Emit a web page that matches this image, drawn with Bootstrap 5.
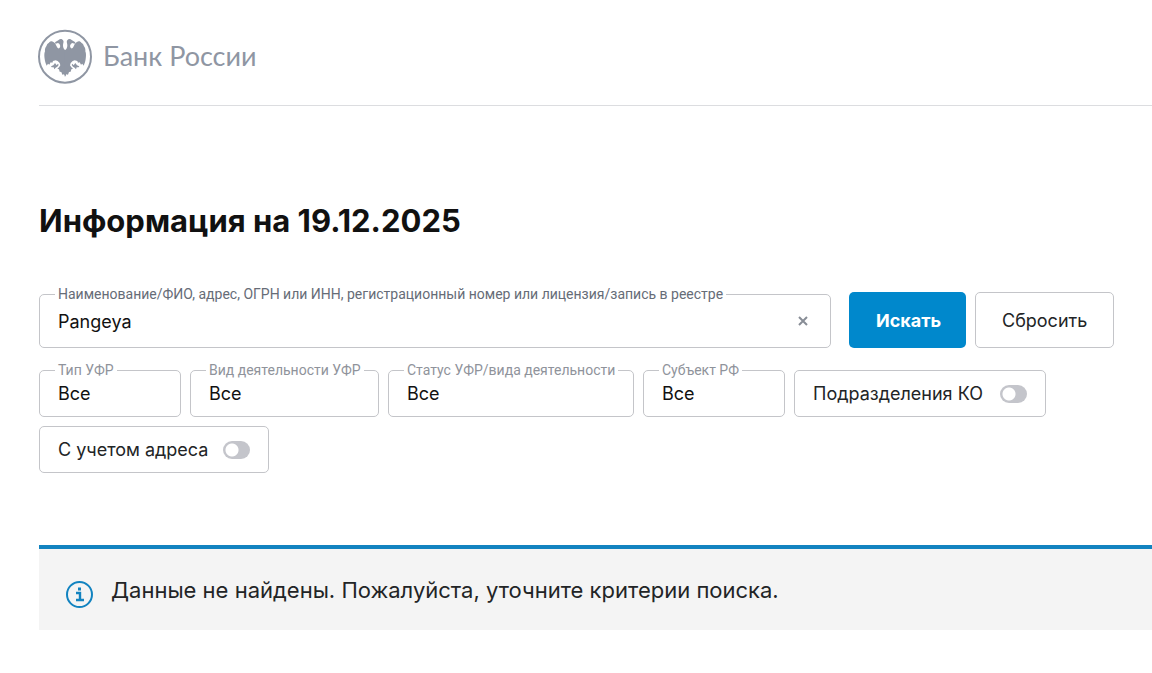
<!DOCTYPE html>
<html lang="ru">
<head>
<meta charset="utf-8">
<meta name="viewport" content="width=device-width, initial-scale=1">
<title>Банк России</title>
<link href="https://cdn.jsdelivr.net/npm/bootstrap@5.3.0/dist/css/bootstrap.min.css" rel="stylesheet">
<style>
  :root { --edge: 39px; --line: #c4c5c9; --accent: #0088cc; }
  body { font-family: Inter, "Liberation Sans", sans-serif; font-size: 18px; line-height: 24px; color: #222426; background: #fff; }
  .page { padding-left: var(--edge); }
  .site-header { padding: 29px 0 21px; border-bottom: 1px solid #dcdde0; }
  .brand { gap: 11px; margin-left: -1px; color: #8f96a3; font-family: Lato, "Open Sans", sans-serif; font-size: 27px; line-height: 32px; }
  .brand span { padding-bottom: 2px; }
  .page-title { margin: 95px 0 51px; font-size: 31px; line-height: 40px; font-weight: 700; color: #111; }
  .search-row { padding-right: 38px; gap: 9px; }
  .field { position: relative; border: 1px solid var(--line); border-radius: 5px; }
  .field-caption { position: absolute; top: -10px; left: 15px; padding: 0 3px; background: #fff; color: #8f939b; font-family: Roboto, sans-serif; font-size: 14px; line-height: 18px; white-space: nowrap; }
  .field-main { height: 54px; margin-right: 9px; }
  .field-main .field-caption { color: #666c77; }
  .field input[type=text], .field select { width: 100%; height: 100%; padding: 0 18px; border: 0; background: transparent; color: #111; appearance: none; outline-offset: -2px; }
  .clear-btn { padding: 0 22px; border: 0; background: transparent; color: #888d96; }
  .action { height: 56px; padding: 0 26px; border-radius: 5px; font-size: 18px; }
  .action-find { width: 117px; background: var(--accent); color: #fff; font-weight: 700; }
  .action-reset { width: 139px; border-color: var(--line); color: #222426; }
  .filters { gap: 9px; margin-top: 22px; padding-right: 38px; }
  .filter { height: 47px; }
  .w-short { width: 142px; }
  .w-kind { width: 189px; }
  .w-status { width: 246px; }
  .w-units { width: 252px; }
  .w-address { width: 230px; }
  .toggle-box { padding: 0 18px; white-space: nowrap; }
  .switch { appearance: none; width: 27px; height: 18px; margin: 0; border-radius: 9px; background: radial-gradient(circle at 9px 9px, #fff 6px, transparent 7px) #c4c5cb; }
  .switch:checked { background: radial-gradient(circle at 18px 9px, #fff 6px, transparent 7px) var(--accent); }
  .notice { gap: 18px; margin-top: 72px; padding: 26px 27px 22px; border-top: 4px solid #1283c0; background: #f4f4f4; font-size: 22px; line-height: 30px; }
  .notice svg { margin-top: 6px; }
</style>
</head>
<body>
<div class="page">
  <header class="site-header d-flex">
    <a href="#" class="brand d-flex align-items-center text-decoration-none">
      <svg width="54" height="55" viewBox="24 29 162 165" aria-hidden="true">
        <circle cx="105" cy="112" r="78" fill="none" stroke="currentColor" stroke-width="6"/>
        <g id="half" fill="currentColor">
          <path d="M107 93C101 91 99 84 99 78C99 72 102 68 100 64C97 58 90 57 86 62L75 69L77 73L84 71C90 74 92 79 90 84C88 89 83 88 81 83C78 77 75 69 70 68C66 64 60 65 57 70C52 72 50 77 49 81C46 85 44 91 45 96C42 103 43 111 44 119C45 127 47 132 50 139L54 133L58 136L62 129L67 130L69 125L77 123L83 125L89 131L91 138L87 144L82 148L87 150L89 157L94 158L97 166L102 165L107 172Z"/>
          <path d="M63 141L70 138L75 131L80 138L84 133L86 137L82 142L77 145L73 150L71 144L65 144Z"/>
        </g>
        <use href="#half" transform="translate(211 0) scale(-1 1)"/>
      </svg>
      <span>Банк России</span>
    </a>
  </header>

  <main>
    <h1 class="page-title">Информация на 19.12.2025</h1>
    <form onsubmit="return false">
      <div class="search-row d-flex align-items-end">
        <div class="field field-main d-flex flex-grow-1">
          <label class="field-caption" for="query">Наименование/ФИО, адрес, ОГРН или ИНН, регистрационный номер или лицензия/запись в реестре</label>
          <input type="text" id="query" value="Pangeya">
          <button type="button" class="clear-btn" aria-label="Очистить">
            <svg class="d-block" width="10" height="10" viewBox="0 0 10 10" stroke="currentColor" stroke-width="2"><path d="M1 1l8 8M9 1L1 9"/></svg>
          </button>
        </div>
        <button type="submit" class="btn action action-find">Искать</button>
        <button type="reset" class="btn action action-reset">Сбросить</button>
      </div>

      <div class="filters d-flex flex-wrap">
        <div class="field filter w-short">
          <label class="field-caption" for="type">Тип УФР</label>
          <select id="type"><option>Все</option></select>
        </div>
        <div class="field filter w-kind">
          <label class="field-caption" for="kind">Вид деятельности УФР</label>
          <select id="kind"><option>Все</option></select>
        </div>
        <div class="field filter w-status">
          <label class="field-caption" for="status">Статус УФР/вида деятельности</label>
          <select id="status"><option>Все</option></select>
        </div>
        <div class="field filter w-short">
          <label class="field-caption" for="region">Субъект РФ</label>
          <select id="region"><option>Все</option></select>
        </div>
        <label class="field filter toggle-box w-units d-flex align-items-center justify-content-between">Подразделения КО
          <input type="checkbox" role="switch" class="switch">
        </label>
        <label class="field filter toggle-box w-address d-flex align-items-center justify-content-between">С учетом адреса
          <input type="checkbox" role="switch" class="switch">
        </label>
      </div>
    </form>

    <div class="notice d-flex align-items-start">
      <svg class="flex-shrink-0" width="27" height="27" viewBox="0 0 27 27" fill="none" stroke="#1283c0" stroke-width="2" aria-hidden="true">
        <circle cx="13.500" cy="13.500" r="12.500"/>
        <path d="M10 12h4v7M10 19h8" stroke-width="2.400"/><path d="M12 8h3" stroke-width="3"/>
      </svg>
      <span>Данные не найдены. Пожалуйста, уточните критерии поиска.</span>
    </div>
  </main>
</div>
<script src="https://cdn.jsdelivr.net/npm/bootstrap@5.3.0/dist/js/bootstrap.bundle.min.js"></script>
</body>
</html>
